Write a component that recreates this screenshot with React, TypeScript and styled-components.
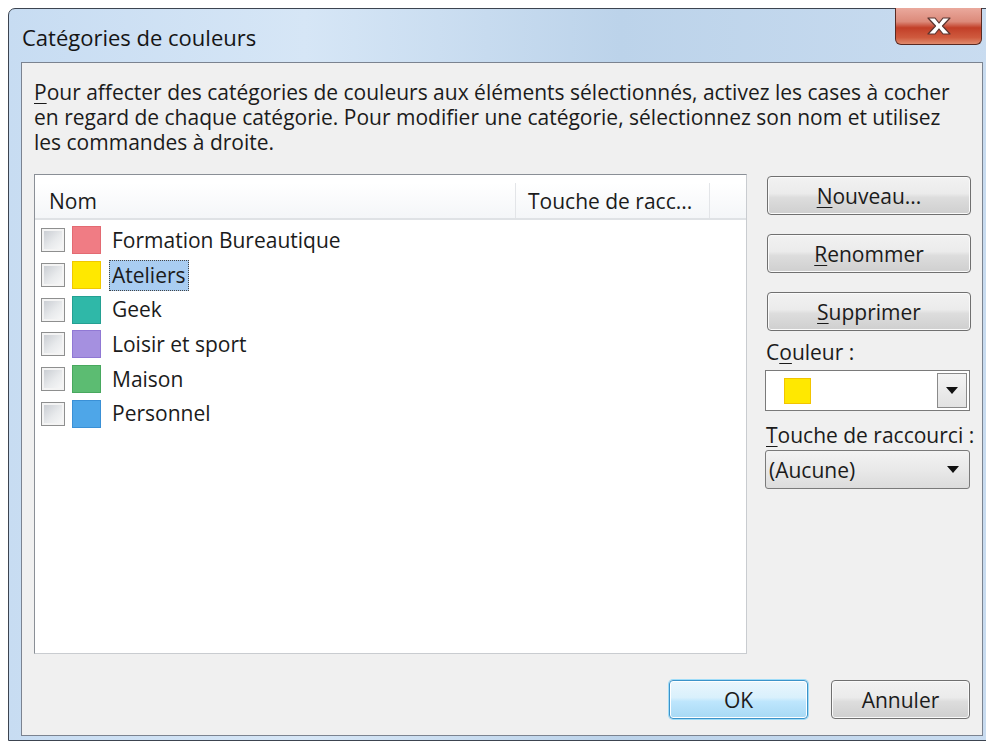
import styled, { createGlobalStyle } from "styled-components";

const GlobalStyle = createGlobalStyle`
  html, body {
    margin: 0;
    padding: 0;
    background: #ffffff;
  }
  body {
    font-family: "Open Sans", "Noto Sans", sans-serif;
    color: #1b1b1b;
  }
`;

const Page = styled.div`
  width: 986px;
  height: 743px;
  padding: 8px 0 0 8px;
  box-sizing: border-box;
  overflow: hidden;
`;

const Frame = styled.div`
  width: 988px;
  height: 733px;
  box-sizing: border-box;
  border: 1px solid #3c4450;
  border-radius: 7px 7px 0 0;
  background: linear-gradient(90deg, #c7dcf2 0%, #d6e6f6 30%, #bcd3ea 62%, #c9dcf0 100%);
  padding: 0 12px 4px 12px;
  display: flex;
  flex-direction: column;
`;

const TitleBar = styled.div`
  height: 53px;
  display: flex;
  align-items: flex-start;
  justify-content: space-between;
`;

const Title = styled.span`
  font-size: 22px;
  margin-top: 13px;
  margin-left: 1px;
  color: #151515;
`;

const CloseButton = styled.div`
  width: 87px;
  height: 37px;
  margin-top: -1px;
  margin-right: 1px;
  box-sizing: border-box;
  border: 1px solid #5a2a22;
  border-top: none;
  border-radius: 0 0 6px 6px;
  background: linear-gradient(180deg, #eaa99d 0%, #dc8a7a 38%, #c23f28 55%, #cf5a3e 82%, #e08a6c 100%);
  display: flex;
  align-items: center;
  justify-content: center;
`;

const Panel = styled.div`
  flex: 1;
  box-sizing: border-box;
  border: 1px solid #7b8390;
  background: #f0f0f0;
  padding: 17px 12px 0 12px;
  display: flex;
  flex-direction: column;
`;

const Intro = styled.p`
  margin: 0;
  font-size: 21px;
  line-height: 25px;
  white-space: nowrap;
`;

const Key = styled.u`
  text-decoration-thickness: 1px;
  text-underline-offset: 3px;
`;

const Body = styled.div`
  margin-top: 19px;
  display: flex;
  gap: 18px;
  align-items: flex-start;
`;

const ListBox = styled.div`
  width: 713px;
  height: 480px;
  flex-shrink: 0;
  box-sizing: border-box;
  border: 1px solid #8a8f96;
  border-right-color: #c9ccd0;
  border-bottom-color: #c9ccd0;
  background: #ffffff;
  padding-top: 8px;
`;

const Header = styled.div`
  height: 35px;
  display: grid;
  grid-template-columns: 481px 194px;
  background: linear-gradient(180deg, #ffffff 0%, #f4f6f8 100%);
  border-bottom: 2px solid #dfe2e5;
`;

const HeaderCell = styled.div<{ $first?: boolean }>`
  font-size: 21px;
  display: flex;
  align-items: center;
  padding-left: ${(p) => (p.$first ? "14px" : "12px")};
  border-right: 1px solid #e3e5e8;
  color: #1b1b1b;
`;

const Rows = styled.div`
  padding-top: 3px;
  display: flex;
  flex-direction: column;
`;

const Row = styled.div`
  height: 34.7px;
  display: flex;
  align-items: center;
  padding-left: 6px;
`;

const Check = styled.span`
  width: 24px;
  height: 24px;
  box-sizing: border-box;
  border: 1px solid #8e8f8f;
  background: linear-gradient(135deg, #c4c8ce 0%, #e8eaec 55%, #fafafa 100%);
  box-shadow: inset 0 0 0 2px #f4f4f4;
`;

const Swatch = styled.span<{ $color: string; $edge: string }>`
  width: 29px;
  height: 28px;
  box-sizing: border-box;
  margin-left: 7px;
  background: ${(p) => p.$color};
  border: 1px solid ${(p) => p.$edge};
`;

const Label = styled.span<{ $selected?: boolean }>`
  margin-left: 8px;
  font-size: 21px;
  line-height: 24px;
  padding: 2px 2px 3px 2px;
  border: 1px dotted ${(p) => (p.$selected ? "#444" : "transparent")};
  background: ${(p) => (p.$selected ? "#a9cdf1" : "transparent")};
`;

const Side = styled.div`
  width: 207px;
  min-width: 0;
  margin-top: 2px;
  display: flex;
  flex-direction: column;
`;

const Button = styled.button<{ $primary?: boolean }>`
  height: 39px;
  box-sizing: border-box;
  font-family: inherit;
  font-size: 21px;
  color: #1b1b1b;
  border-radius: 4px;
  border: 1px solid ${(p) => (p.$primary ? "#3c93c9" : "#707070")};
  background: ${(p) =>
    p.$primary
      ? "linear-gradient(180deg, #eaf6fd 0%, #d9f0fc 45%, #bee6fd 55%, #a7d9f5 100%)"
      : "linear-gradient(180deg, #f2f2f2 0%, #ebebeb 45%, #dddddd 55%, #cfcfcf 100%)"};
  box-shadow: ${(p) =>
    p.$primary ? "0 0 0 1px #9fdcf8, inset 0 0 0 1px #ffffff" : "inset 0 0 0 1px #fafafa"};
  padding: 0;
`;

const SideButton = styled(Button)`
  width: 204px;
  margin-left: 2px;
  margin-bottom: 19px;
`;

const FieldLabel = styled.div<{ $top: number; $bottom: number }>`
  font-size: 21px;
  line-height: 20px;
  white-space: nowrap;
  margin: ${(p) => `${p.$top}px 0 ${p.$bottom}px 1px`};
`;

const ColorCombo = styled.div`
  height: 41px;
  box-sizing: border-box;
  border: 1px solid #7a7a7a;
  background: #ffffff;
  display: flex;
  align-items: center;
  padding-left: 18px;
  margin-bottom: 14px;
`;

const ComboSwatch = styled.span`
  width: 27px;
  height: 26px;
  box-sizing: border-box;
  background: #ffe800;
  border: 1px solid #f2c400;
`;

const ComboArrow = styled.span`
  margin-left: auto;
  margin-right: 2px;
  width: 30px;
  height: 35px;
  box-sizing: border-box;
  border: 1px solid #8a8a8a;
  background: linear-gradient(180deg, #f4f4f4 0%, #e2e2e2 100%);
  display: flex;
  align-items: center;
  justify-content: center;
`;

const Select = styled.div`
  height: 39px;
  box-sizing: border-box;
  border: 1px solid #7a7a7a;
  border-radius: 3px;
  background: linear-gradient(180deg, #f3f3f3 0%, #e9e9e9 50%, #dcdcdc 100%);
  display: flex;
  align-items: center;
  padding: 0 10px 0 3px;
  font-size: 21px;
  justify-content: space-between;
`;

const Footer = styled.div`
  margin-top: auto;
  margin-bottom: 16px;
  display: flex;
  justify-content: flex-end;
  gap: 23px;
`;

const FooterButton = styled(Button)`
  width: 139px;
`;

const Arrow = () => (
  <svg width="12" height="7" viewBox="0 0 12 7">
    <path d="M0 0h12L6 7z" fill="#111" />
  </svg>
);

const categories = [
  { name: "Formation Bureautique", color: "#f07c84", edge: "#e36a72" },
  { name: "Ateliers", color: "#ffe800", edge: "#f0c800" },
  { name: "Geek", color: "#2fb8a8", edge: "#24a092" },
  { name: "Loisir et sport", color: "#a590e0", edge: "#9078d4" },
  { name: "Maison", color: "#5cbc72", edge: "#48a85e" },
  { name: "Personnel", color: "#4ea6e8", edge: "#3a90d6" },
];

export default function App() {
  return (
    <>
      <GlobalStyle />
      <Page>
        <Frame>
          <TitleBar>
            <Title>Catégories de couleurs</Title>
            <CloseButton>
              <svg width="26" height="20" viewBox="0 0 26 20">
                <path
                  d="M2 2h7l4 5 4-5h7l-7.5 8 7.5 8h-7l-4-5-4 5H2l7.5-8z"
                  fill="#ffffff"
                  stroke="#5a3530"
                  strokeWidth="1.2"
                  strokeLinejoin="round"
                />
              </svg>
            </CloseButton>
          </TitleBar>
          <Panel>
            <Intro>
              <Key>P</Key>our affecter des catégories de couleurs aux éléments sélectionnés, activez les cases à cocher
              <br />
              en regard de chaque catégorie. Pour modifier une catégorie, sélectionnez son nom et utilisez
              <br />
              les commandes à droite.
            </Intro>
            <Body>
              <ListBox>
                <Header>
                  <HeaderCell $first>Nom</HeaderCell>
                  <HeaderCell>Touche de racc...</HeaderCell>
                </Header>
                <Rows>
                  {categories.map((c) => (
                    <Row key={c.name}>
                      <Check />
                      <Swatch $color={c.color} $edge={c.edge} />
                      <Label $selected={c.name === "Ateliers"}>{c.name}</Label>
                    </Row>
                  ))}
                </Rows>
              </ListBox>
              <Side>
                <SideButton>
                  <Key>N</Key>ouveau...
                </SideButton>
                <SideButton>
                  <Key>R</Key>enommer
                </SideButton>
                <SideButton>
                  <Key>S</Key>upprimer
                </SideButton>
                <FieldLabel $top={-8} $bottom={8}>
                  C<Key>o</Key>uleur :
                </FieldLabel>
                <ColorCombo>
                  <ComboSwatch />
                  <ComboArrow>
                    <Arrow />
                  </ComboArrow>
                </ColorCombo>
                <FieldLabel $top={0} $bottom={5}>
                  <Key>T</Key>ouche de raccourci :
                </FieldLabel>
                <Select>
                  <span>(Aucune)</span>
                  <Arrow />
                </Select>
              </Side>
            </Body>
            <Footer>
              <FooterButton $primary>OK</FooterButton>
              <FooterButton>Annuler</FooterButton>
            </Footer>
          </Panel>
        </Frame>
      </Page>
    </>
  );
}
